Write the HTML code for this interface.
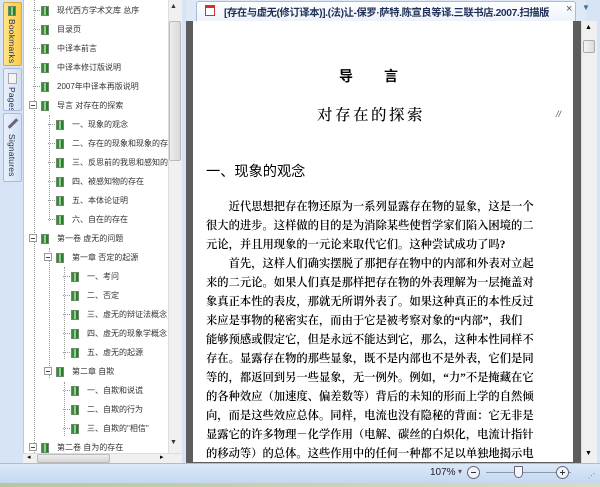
<!DOCTYPE html>
<html><head><meta charset="utf-8">
<style>
*{margin:0;padding:0;box-sizing:border-box}
body{width:600px;height:487px;overflow:hidden;background:#d6e4f5;font-family:"Liberation Sans","Noto Sans CJK SC",sans-serif;position:relative}
.abs{position:absolute}
.vt{position:absolute;left:3px;width:19px;border:1px solid #a9bdd8;border-radius:2px;background:linear-gradient(90deg,#e8f0fb,#d3e1f3);overflow:hidden}
.vt span{position:absolute;left:3px;writing-mode:vertical-rl;font-size:8.5px;color:#1e2f4a;letter-spacing:.2px}
.panel{left:23px;top:0;width:145px;height:453px;background:#fff;overflow:hidden;border-left:1px solid #b8c8dc}
.row{position:absolute;height:19px;font-size:8px;color:#333;white-space:nowrap;line-height:19px}
.ic{position:absolute;top:5px;width:8px;height:10px;background:linear-gradient(90deg,#3a8a3a 0 35%,#8fd08f 35% 70%,#2f7a2f 70%);border:1px solid #6a8a6a}
.ln{position:absolute;border-top:1px dotted #999;width:9px;top:9px}
.vl{position:absolute;border-left:1px dotted #999}
.mb{position:absolute;top:5px;width:8px;height:8px;border:1px solid #999;background:#fff}
.mb:after{content:"";position:absolute;left:1px;top:3px;width:4px;height:1px;background:#444}
.pg{position:absolute;left:193px;top:21px;width:380px;height:441px;background:#fff;overflow:hidden;font-family:"Liberation Serif","Noto Serif CJK SC",serif;color:#000}
.p{position:absolute;left:13px;font-size:11.3px;letter-spacing:0;white-space:nowrap;line-height:19px;font-weight:600}
</style></head><body>
<div class="vt" style="top:2px;height:64px;background:linear-gradient(90deg,#ffe48a,#fcc94a);border-color:#d9a93a"><div class="ic" style="left:4px;top:3px"></div><span style="top:16px">Bookmarks</span></div>
<div class="vt" style="top:68px;height:43px"><div style="position:absolute;left:4px;top:4px;width:9px;height:11px;border:1px solid #aaa;background:#f4f4f4"></div><span style="top:18px">Pages</span></div>
<div class="vt" style="top:113px;height:69px"><div style="position:absolute;left:3px;top:8px;width:12px;height:3px;background:#667;transform:rotate(-45deg)"></div><span style="top:20px">Signatures</span></div>

<div class="abs panel">
<div class="vl" style="left:10px;top:0;height:453px"></div>
<div class="vl" style="left:25px;top:115px;height:106px"></div>
<div class="vl" style="left:25px;top:248px;height:130px"></div>
<div class="vl" style="left:40px;top:267px;height:92px"></div>
<div class="vl" style="left:40px;top:382px;height:54px"></div>
</div>

<div class="abs" style="left:0;top:0;width:168px;height:453px;overflow:hidden">
<div class="row" style="top:1px;left:33px"><div class="ln" style="left:0"></div><div class="ic" style="left:8px"></div><span style="position:absolute;left:24px">现代西方学术文库 总序</span></div>
<div class="row" style="top:20px;left:33px"><div class="ln" style="left:0"></div><div class="ic" style="left:8px"></div><span style="position:absolute;left:24px">目录页</span></div>
<div class="row" style="top:39px;left:33px"><div class="ln" style="left:0"></div><div class="ic" style="left:8px"></div><span style="position:absolute;left:24px">中译本前言</span></div>
<div class="row" style="top:58px;left:33px"><div class="ln" style="left:0"></div><div class="ic" style="left:8px"></div><span style="position:absolute;left:24px">中译本修订版说明</span></div>
<div class="row" style="top:77px;left:33px"><div class="ln" style="left:0"></div><div class="ic" style="left:8px"></div><span style="position:absolute;left:24px">2007年中译本再版说明</span></div>
<div class="row" style="top:96px;left:29px;width:140px"><div class="mb" style="left:0"></div><div class="ic" style="left:12px"></div><span style="position:absolute;left:28px">导言 对存在的探索</span></div>
<div class="row" style="top:115px;left:48px"><div class="ln" style="left:0"></div><div class="ic" style="left:8px"></div><span style="position:absolute;left:24px">一、现象的观念</span></div>
<div class="row" style="top:134px;left:48px"><div class="ln" style="left:0"></div><div class="ic" style="left:8px"></div><span style="position:absolute;left:24px">二、存在的现象和现象的存在</span></div>
<div class="row" style="top:153px;left:48px"><div class="ln" style="left:0"></div><div class="ic" style="left:8px"></div><span style="position:absolute;left:24px">三、反思前的我思和感知的存在</span></div>
<div class="row" style="top:172px;left:48px"><div class="ln" style="left:0"></div><div class="ic" style="left:8px"></div><span style="position:absolute;left:24px">四、被感知物的存在</span></div>
<div class="row" style="top:191px;left:48px"><div class="ln" style="left:0"></div><div class="ic" style="left:8px"></div><span style="position:absolute;left:24px">五、本体论证明</span></div>
<div class="row" style="top:210px;left:48px"><div class="ln" style="left:0"></div><div class="ic" style="left:8px"></div><span style="position:absolute;left:24px">六、自在的存在</span></div>
<div class="row" style="top:229px;left:29px;width:140px"><div class="mb" style="left:0"></div><div class="ic" style="left:12px"></div><span style="position:absolute;left:28px">第一卷 虚无的问题</span></div>
<div class="row" style="top:248px;left:44px;width:130px"><div class="mb" style="left:0"></div><div class="ic" style="left:12px"></div><span style="position:absolute;left:28px">第一章 否定的起源</span></div>
<div class="row" style="top:267px;left:63px"><div class="ln" style="left:0"></div><div class="ic" style="left:8px"></div><span style="position:absolute;left:24px">一、考问</span></div>
<div class="row" style="top:286px;left:63px"><div class="ln" style="left:0"></div><div class="ic" style="left:8px"></div><span style="position:absolute;left:24px">二、否定</span></div>
<div class="row" style="top:305px;left:63px"><div class="ln" style="left:0"></div><div class="ic" style="left:8px"></div><span style="position:absolute;left:24px">三、虚无的辩证法概念</span></div>
<div class="row" style="top:324px;left:63px"><div class="ln" style="left:0"></div><div class="ic" style="left:8px"></div><span style="position:absolute;left:24px">四、虚无的现象学概念</span></div>
<div class="row" style="top:343px;left:63px"><div class="ln" style="left:0"></div><div class="ic" style="left:8px"></div><span style="position:absolute;left:24px">五、虚无的起源</span></div>
<div class="row" style="top:362px;left:44px;width:130px"><div class="mb" style="left:0"></div><div class="ic" style="left:12px"></div><span style="position:absolute;left:28px">第二章 自欺</span></div>
<div class="row" style="top:381px;left:63px"><div class="ln" style="left:0"></div><div class="ic" style="left:8px"></div><span style="position:absolute;left:24px">一、自欺和说谎</span></div>
<div class="row" style="top:400px;left:63px"><div class="ln" style="left:0"></div><div class="ic" style="left:8px"></div><span style="position:absolute;left:24px">二、自欺的行为</span></div>
<div class="row" style="top:419px;left:63px"><div class="ln" style="left:0"></div><div class="ic" style="left:8px"></div><span style="position:absolute;left:24px">三、自欺的"相信"</span></div>
<div class="row" style="top:438px;left:29px;width:140px"><div class="mb" style="left:0"></div><div class="ic" style="left:12px"></div><span style="position:absolute;left:28px">第二卷 自为的存在</span></div>
</div>

<div class="abs" style="left:168px;top:0;width:14px;height:453px;background:#f0f0f0;border-left:1px solid #ddd"></div>
<div class="abs" style="left:170px;top:3px;font-size:7px;color:#333">▲</div>
<div class="abs" style="left:169px;top:21px;width:12px;height:140px;background:linear-gradient(90deg,#eee,#d8d8d8);border:1px solid #bbb;border-radius:2px"></div>
<div class="abs" style="left:170px;top:439px;font-size:7px;color:#333">▼</div>
<div class="abs" style="left:23px;top:453px;width:159px;height:11px;background:#f0f0f0;border-top:1px solid #ddd"></div>
<div class="abs" style="left:37px;top:454px;width:73px;height:9px;background:linear-gradient(#eee,#d4d4d4);border:1px solid #bbb;border-radius:2px"></div>
<div class="abs" style="left:27px;top:453px;font-size:7px">◂</div>
<div class="abs" style="left:160px;top:453px;font-size:7px">▸</div>

<div class="abs" style="left:186px;top:0;width:400px;height:21px;background:#dfe9f6"></div>
<div class="abs" style="left:196px;top:1px;width:380px;height:20px;background:linear-gradient(#fdfeff,#eef3fa);border:1px solid #a8bbd4;border-bottom:none;border-radius:3px 3px 0 0"></div>
<div class="abs" style="left:205px;top:5px;width:10px;height:11px;background:#fff;border:1px solid #c33;border-top:3px solid #c33"></div>
<div class="abs" style="left:224px;top:4px;font-size:10.3px;font-weight:bold;color:#1f2f55;white-space:nowrap;letter-spacing:-.4px">[存在与虚无(修订译本)].(法)让-保罗·萨特.陈宣良等译.三联书店.2007.扫描版</div>
<div class="abs" style="left:566px;top:3px;font-size:11px;color:#555">×</div>
<div class="abs" style="left:582px;top:3px;font-size:8px;color:#3a6aa8">▼</div>

<div class="abs" style="left:186px;top:21px;width:395px;height:442px;background:#5d5d5d"></div>
<div class="pg">
<div class="abs" style="left:146px;top:47px;font-size:14px;font-weight:bold;font-family:'Noto Sans CJK SC',sans-serif;letter-spacing:31px;line-height:17px">导言</div>
<div class="abs" style="left:124px;top:85px;font-size:15.5px;letter-spacing:2.5px;line-height:19px;font-weight:500">对存在的探索</div>
<div class="abs" style="left:363px;top:88px;font-size:9px;font-style:italic">//</div>
<div class="abs" style="left:13px;top:141px;font-size:14.2px;font-family:'Noto Sans CJK SC',sans-serif;line-height:18px">一、现象的观念</div>
<div class="p" style="top:177px">　　近代思想把存在物还原为一系列显露存在物的显象，这是一个</div>
<div class="p" style="top:196px">很大的进步。这样做的目的是为消除某些使哲学家们陷入困境的二</div>
<div class="p" style="top:215px">元论，并且用现象的一元论来取代它们。这种尝试成功了吗?</div>
<div class="p" style="top:234px">　　首先，这样人们确实摆脱了那把存在物中的内部和外表对立起</div>
<div class="p" style="top:253px">来的二元论。如果人们真是那样把存在物的外表理解为一层掩盖对</div>
<div class="p" style="top:272px">象真正本性的表皮，那就无所谓外表了。如果这种真正的本性反过</div>
<div class="p" style="top:291px">来应是事物的秘密实在，而由于它是被考察对象的“内部”，我们</div>
<div class="p" style="top:310px">能够预感或假定它，但是永远不能达到它，那么，这种本性同样不</div>
<div class="p" style="top:329px">存在。显露存在物的那些显象，既不是内部也不是外表，它们是同</div>
<div class="p" style="top:348px">等的，都返回到另一些显象，无一例外。例如，“力”不是掩藏在它</div>
<div class="p" style="top:367px">的各种效应（加速度、偏差数等）背后的未知的形而上学的自然倾</div>
<div class="p" style="top:386px">向，而是这些效应总体。同样，电流也没有隐秘的背面：它无非是</div>
<div class="p" style="top:405px">显露它的许多物理－化学作用（电解、碳丝的白炽化，电流计指针</div>
<div class="p" style="top:424px">的移动等）的总体。这些作用中的任何一种都不足以单独地揭示电</div>
</div>
<div class="abs" style="left:581px;top:21px;width:16px;height:442px;background:#f0f0f0;border-left:1px solid #ddd"></div>
<div class="abs" style="left:585px;top:24px;font-size:7px">▲</div>
<div class="abs" style="left:583px;top:40px;width:12px;height:13px;background:linear-gradient(90deg,#f4f4f4,#dcdcdc);border:1px solid #aaa;border-radius:2px"></div>
<div class="abs" style="left:585px;top:450px;font-size:7px">▼</div>

<div class="abs" style="left:0;top:463px;width:600px;height:20px;background:linear-gradient(#dbe8f7,#c5d8ef);border-top:1px solid #a9bdd8"></div>
<div class="abs" style="left:0;top:483px;width:600px;height:4px;background:linear-gradient(90deg,#b8c6a0,#d8dcc8)"></div>
<div class="abs" style="left:430px;top:467px;font-size:10px;color:#223">107%</div>
<div class="abs" style="left:458px;top:467px;font-size:8px;color:#556">▾</div>
<div class="abs" style="left:467px;top:466px;width:13px;height:13px;border:1px solid #667;border-radius:50%;background:#eef4fb"><div style="position:absolute;left:3px;top:5px;width:5px;height:1px;background:#333"></div></div>
<div class="abs" style="left:486px;top:472px;width:85px;height:1px;background:#8898b0"></div>
<div class="abs" style="left:514px;top:466px;width:9px;height:12px;background:#f4f8fd;border:1px solid #667;border-radius:1px 1px 5px 5px"></div>
<div class="abs" style="left:556px;top:466px;width:13px;height:13px;border:1px solid #667;border-radius:50%;background:#eef4fb"><div style="position:absolute;left:3px;top:5px;width:5px;height:1px;background:#333"></div><div style="position:absolute;left:5px;top:3px;width:1px;height:5px;background:#333"></div></div>
<div class="abs" style="left:588px;top:472px;font-size:7px;color:#667">⋰</div>
</body></html>
